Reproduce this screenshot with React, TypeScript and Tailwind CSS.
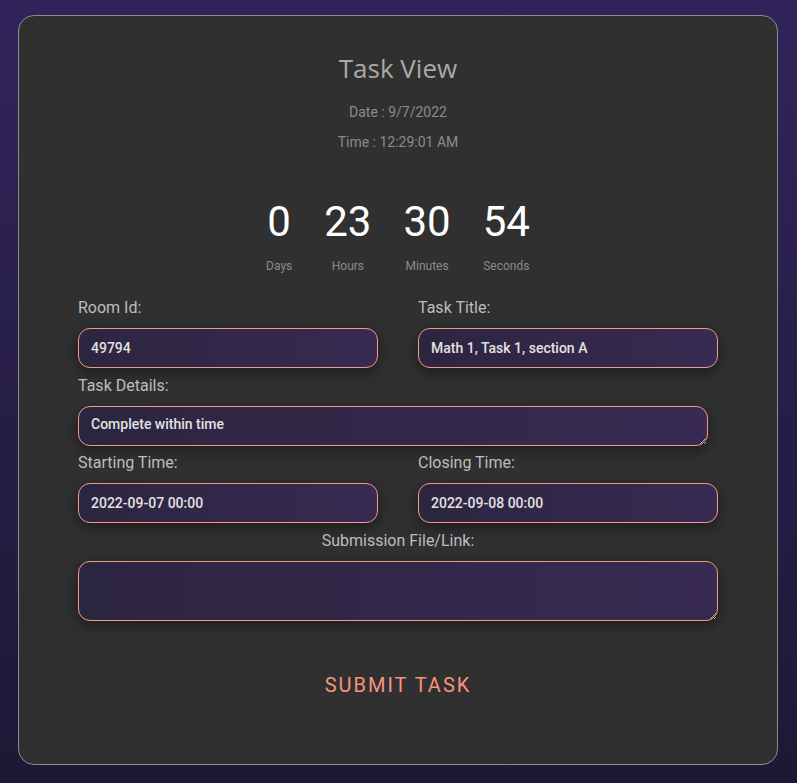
import React from "react";

const inputCls =
  "h-[40px] rounded-[12px] border border-[#f49a80] bg-gradient-to-r from-[#2c2540] to-[#382a53] px-3 text-[14px] font-medium text-[#e2e2e2] shadow-[0_4px_14px_rgba(0,0,0,0.45)] outline-none";

function Field({ label, value }: { label: string; value: string }) {
  return (
    <div className="flex flex-col">
      <label className="text-[16px] leading-[24px] text-[#bdbdbd]">{label}</label>
      <input readOnly value={value} className={`${inputCls} mt-2 w-full`} />
    </div>
  );
}

export default function App() {
  const counts = [
    { n: "0", l: "Days" },
    { n: "23", l: "Hours" },
    { n: "30", l: "Minutes" },
    { n: "54", l: "Seconds" },
  ];
  return (
    <div
      className="min-h-[783px] w-full bg-gradient-to-b from-[#31245b] to-[#1e1836] pl-[18px] pt-[15px] pb-[18px]"
      style={{ fontFamily: "Roboto, 'Liberation Sans', sans-serif" }}
    >
      <div className="flex h-[750px] w-[760px] flex-col items-center rounded-[16px] border border-[#8c8c8c] bg-[#303030] pt-[35px]">
        <h1
          className="text-[26px] leading-[34px] text-[#a9a9a9]"
          style={{ fontFamily: "'Open Sans', sans-serif" }}
        >
          Task View
        </h1>
        <div className="mt-[17px] text-[14px] leading-[20px] text-[#8b8b8b]">Date : 9/7/2022</div>
        <div className="mt-[10px] text-[14px] leading-[20px] text-[#8b8b8b]">Time : 12:29:01 AM</div>

        <div className="mt-[45px] flex gap-8">
          {counts.map((c) => (
            <div key={c.l} className="flex flex-col items-center">
              <div className="text-[42px] leading-[50px] text-white">{c.n}</div>
              <div className="mt-[11px] text-[12px] leading-[16px] text-[#8b8b8b]">{c.l}</div>
            </div>
          ))}
        </div>

        <div className="mt-[22px] flex w-[640px] flex-col">
          <div className="grid grid-cols-2 gap-x-[40px]">
            <Field label="Room Id:" value="49794" />
            <Field label="Task Title:" value="Math 1, Task 1, section A" />
          </div>
          <div className="mt-[6px] flex flex-col">
            <label className="text-[16px] leading-[24px] text-[#bdbdbd]">Task Details:</label>
            <textarea
              readOnly
              value="Complete within time"
              className={`${inputCls} mt-2 w-[630px] resize-y py-[8px] leading-[18px]`}
            />
          </div>
          <div className="mt-[5px] grid grid-cols-2 gap-x-[40px]">
            <Field label="Starting Time:" value="2022-09-07 00:00" />
            <Field label="Closing Time:" value="2022-09-08 00:00" />
          </div>
          <div className="mt-[6px] flex flex-col">
            <label className="text-center text-[16px] leading-[24px] text-[#bdbdbd]">
              Submission File/Link:
            </label>
            <textarea readOnly className={`${inputCls} mt-2 h-[60px] w-full resize-y`} />
          </div>
        </div>

        <button className="mt-[51px] text-[20px] leading-[26px] tracking-[2px] text-[#f4957d]">
          SUBMIT TASK
        </button>
      </div>
    </div>
  );
}
